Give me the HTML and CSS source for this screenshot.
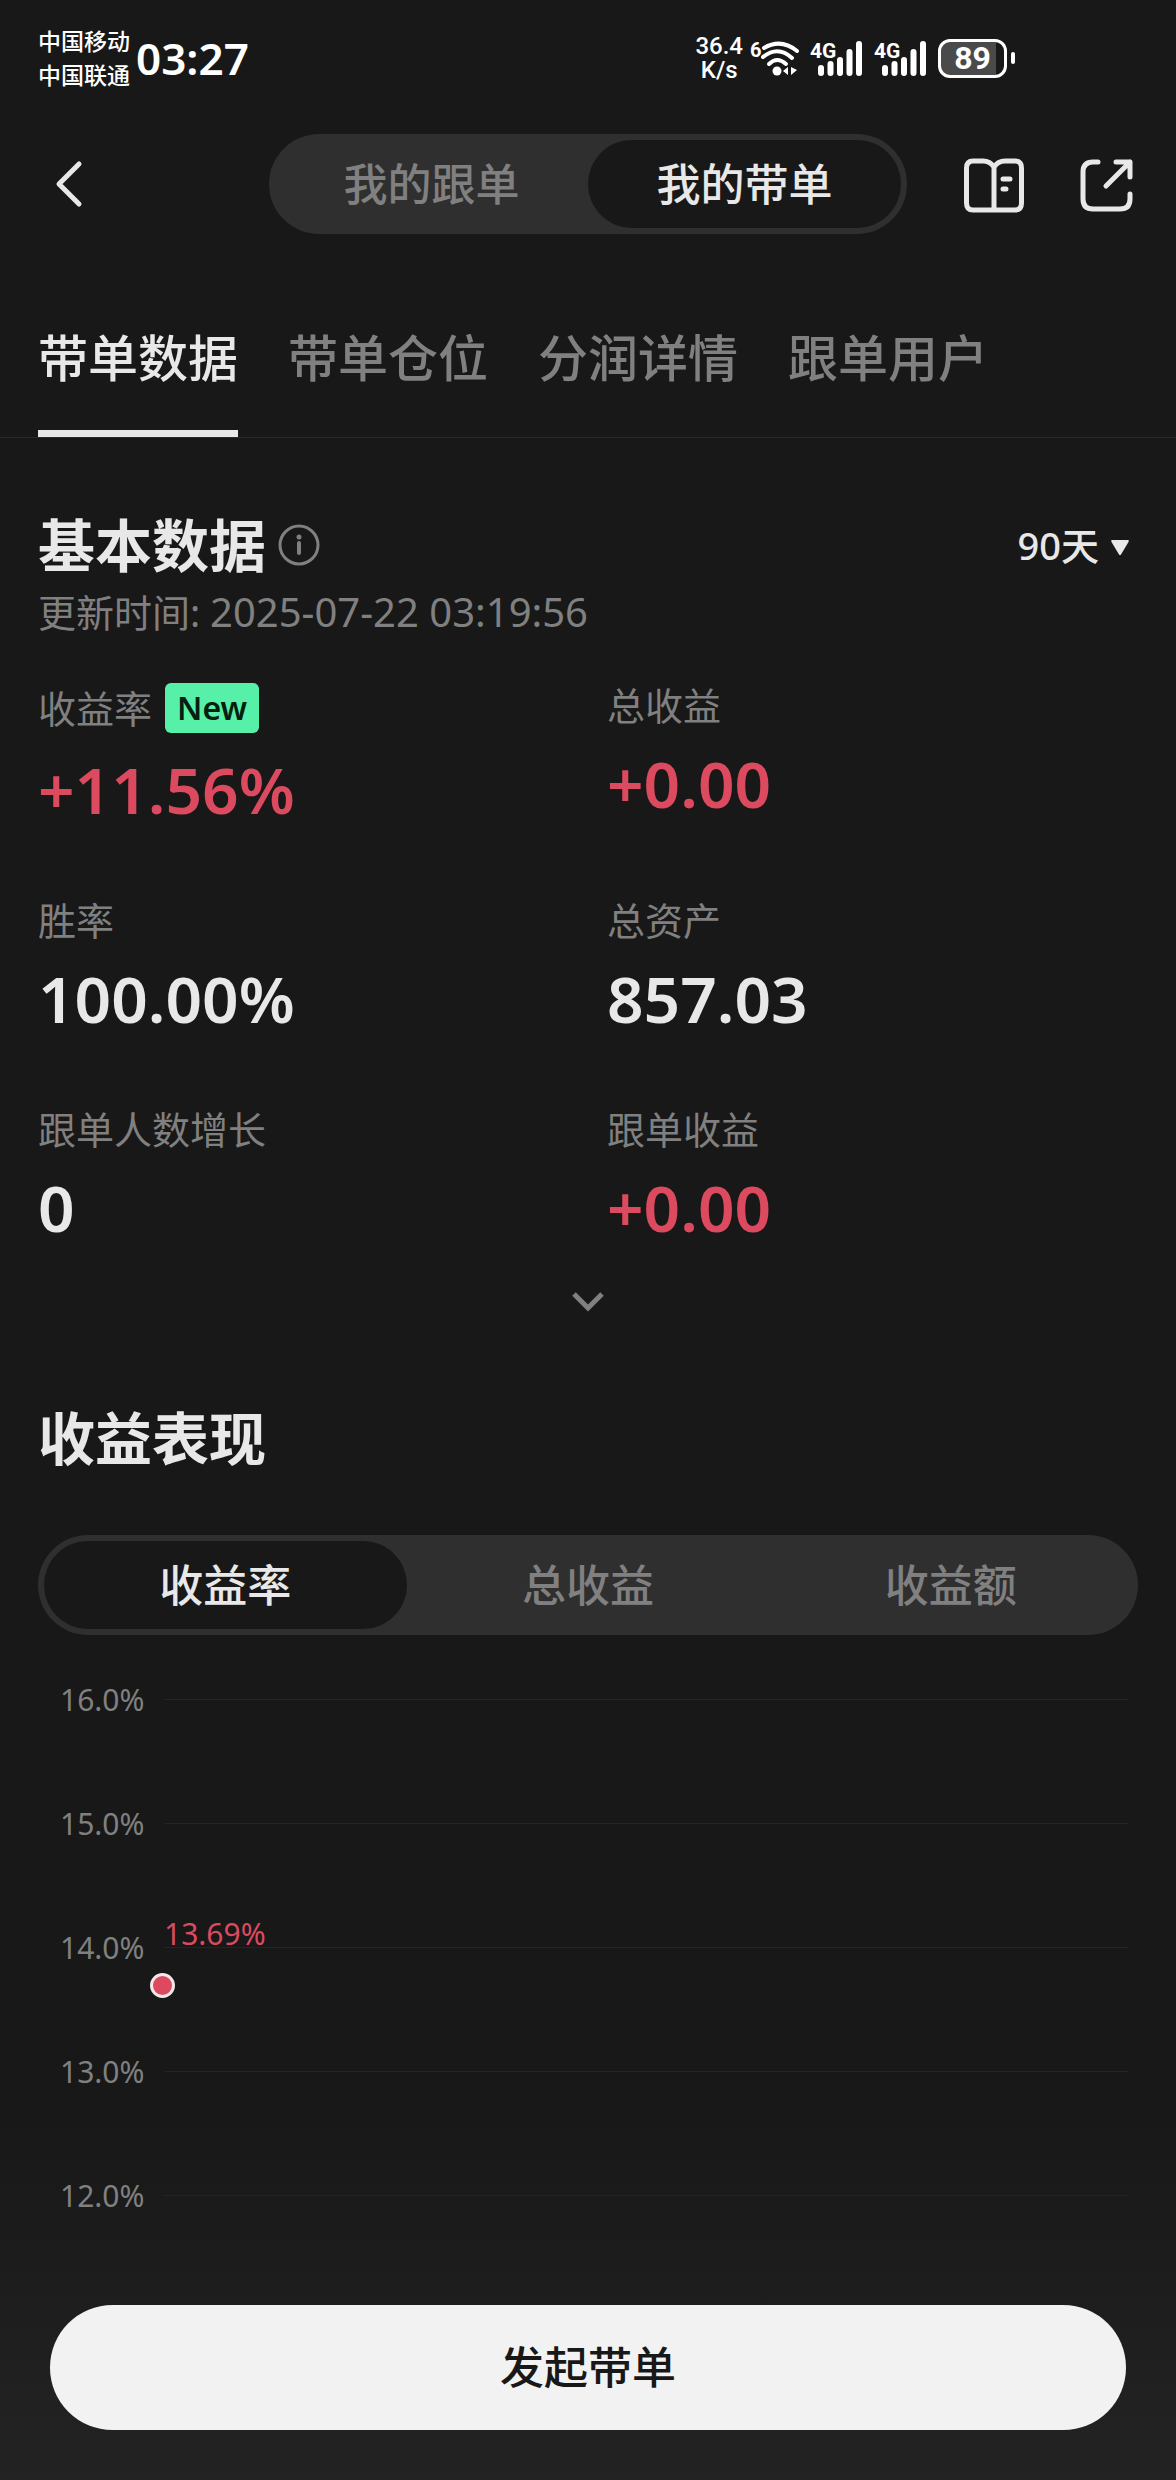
FILE: index.html
```
<!DOCTYPE html>
<html lang="zh-CN">
<head>
  <meta charset="UTF-8">
  <meta name="viewport" content="width=device-width, initial-scale=1.0">
  <title>我的带单</title>
  <link rel="stylesheet" href="styles.css">
</head>
<body>
  <div class="status-bar">
    <div class="carriers">
      <div>中国移动</div>
      <div>中国联通</div>
    </div>
    <div class="clock">03:27</div>
    <div class="status-icons">
      <div class="net-speed">
        <div>36.4</div>
        <div>K/s</div>
      </div>
      <svg class="wifi" width="50" height="38" viewBox="0 0 50 38" fill="none" stroke="#fff" stroke-width="4" stroke-linecap="round">
        <text class="svg-text" x="0" y="18" font-size="20">6</text>
        <path d="M14 9Q31 -1 47 12"/>
        <path d="M13 18Q28 6 42 19"/>
        <path d="M19 25Q27 17 36 25"/>
        <circle cx="27" cy="32" r="4.5" fill="#fff" stroke="none"/>
        <path d="M38 28v8l-5-4zM41 28v8l6-5z" fill="#fff" stroke="none"/>
      </svg>
      <svg class="signal" width="54" height="38" viewBox="0 0 54 38" fill="none" stroke="#fff" stroke-width="6" stroke-linecap="round">
        <text class="svg-text" x="0" y="19" font-size="21">4G</text>
        <path d="M11 29v5M20.500 25v9M30 21v13M39.500 13v21M49 5v29"/>
      </svg>
      <svg class="signal" width="54" height="38" viewBox="0 0 54 38" fill="none" stroke="#fff" stroke-width="6" stroke-linecap="round">
        <text class="svg-text" x="0" y="19" font-size="21">4G</text>
        <path d="M11 29v5M20.500 25v9M30 21v13M39.500 13v21M49 5v29"/>
      </svg>
      <div class="battery"><span class="battery-level">89</span></div>
    </div>
  </div>

  <header class="header">
    <button class="icon-btn back" aria-label="返回">
      <svg width="30" height="50" viewBox="0 0 30 50" fill="none" stroke="#e8e8e8" stroke-width="5" stroke-linecap="round" stroke-linejoin="round">
        <path d="M26 5L6 25L26 45"/>
      </svg>
    </button>
    <div class="segment header-segment" role="tablist">
      <button role="tab">我的跟单</button>
      <button role="tab" class="active" aria-selected="true">我的带单</button>
    </div>
    <div class="header-actions">
      <button class="icon-btn" aria-label="教程">
        <svg width="60" height="56" viewBox="0 0 60 56" fill="none" stroke="#e8e8e8" stroke-width="5" stroke-linecap="round" stroke-linejoin="round">
          <path d="M30 54H9Q2.500 54 2.500 47V12Q2.500 5 9 5H19Q26 5 30 11Q34 5 41 5H51Q57.500 5 57.500 12V47Q57.500 54 51 54H30V12"/>
          <path d="M39 23H46M39 33H42"/>
        </svg>
      </button>
      <button class="icon-btn" aria-label="分享">
        <svg width="54" height="56" viewBox="0 0 54 56" fill="none" stroke="#e8e8e8" stroke-width="5" stroke-linecap="round" stroke-linejoin="round">
          <path d="M18 6H13Q3 6 3 16V43Q3 53 13 53H40Q50 53 50 43V38"/>
          <path d="M36 6H50V21M50 6L26 30"/>
        </svg>
      </button>
    </div>
  </header>

  <nav class="tabs">
    <a href="#data" class="active">带单数据</a>
    <a href="#position">带单仓位</a>
    <a href="#profit">分润详情</a>
    <a href="#users">跟单用户</a>
  </nav>

  <main>
    <section id="data">
      <div class="title-row">
        <h2>基本数据</h2>
        <button class="icon-btn info" aria-label="说明">
          <svg width="42" height="42" viewBox="0 0 42 42" fill="none" stroke="#808080" stroke-width="3" stroke-linecap="round">
            <circle cx="21" cy="21" r="19"/>
            <path d="M21 19v10" stroke-width="4"/>
            <circle cx="21" cy="13" r="2.500" fill="#808080" stroke="none"/>
          </svg>
        </button>
        <label class="period">
          <select aria-label="时间范围">
            <option>90天</option>
            <option>30天</option>
            <option>7天</option>
          </select>
          <svg width="18" height="16" viewBox="0 0 18 16" fill="#e8e8e8"><path d="M1 0H17Q18.500 0 17.500 2L10 14.500Q9 16 8 14.500L.5 2Q-.5 0 1 0Z"/></svg>
        </label>
      </div>
      <p class="updated">更新时间: <time>2025-07-22 03:19:56</time></p>

      <dl class="stats">
        <div>
          <dt>收益率 <span class="badge">New</span></dt>
          <dd class="up">+11.56%</dd>
        </div>
        <div>
          <dt>总收益</dt>
          <dd class="up">+0.00</dd>
        </div>
        <div>
          <dt>胜率</dt>
          <dd>100.00%</dd>
        </div>
        <div>
          <dt>总资产</dt>
          <dd>857.03</dd>
        </div>
        <div>
          <dt>跟单人数增长</dt>
          <dd>0</dd>
        </div>
        <div>
          <dt>跟单收益</dt>
          <dd class="up">+0.00</dd>
        </div>
      </dl>
      <button class="icon-btn expand" aria-label="展开">
        <svg width="32" height="22" viewBox="0 0 32 22" fill="none" stroke="#808080" stroke-width="5">
          <path d="M2 3L16 17L30 3"/>
        </svg>
      </button>
    </section>

    <section>
      <h2 class="section-title">收益表现</h2>
      <div class="segment" role="tablist">
        <button role="tab" class="active" aria-selected="true">收益率</button>
        <button role="tab">总收益</button>
        <button role="tab">收益额</button>
      </div>

      <div class="chart">
        <div class="chart-row"><span>16.0%</span></div>
        <div class="chart-row"><span>15.0%</span></div>
        <div class="chart-row"><span>14.0%</span></div>
        <div class="chart-row"><span>13.0%</span></div>
        <div class="chart-row"><span>12.0%</span></div>
        <div class="plot">
          <!-- (16 - 13.69) / 4 -->
          <div class="point" style="top: 57.75%"><span>13.69%</span></div>
        </div>
      </div>
    </section>
  </main>

  <footer class="action-bar">
    <button class="start-btn">发起带单</button>
  </footer>
</body>
</html>
```
FILE: styles.css
```
:root {
  --bg: #181818;
  --panel: #2f2f2f;
  --text: #e8e8e8;
  --muted: #808080;
  --red: #dc4a5f;
  --green: #56f0a9;
  --side: 38px;
  --font: "Noto Sans", "Noto Sans CJK SC", sans-serif;
}
* { box-sizing: border-box; margin: 0; padding: 0; }
body { min-height: 100vh; display: flex; flex-direction: column; font-family: var(--font); background: var(--bg); color: var(--text); }
button, select { font: inherit; color: inherit; background: none; border: none; cursor: pointer; }
svg { display: block; overflow: visible; }
.icon-btn { display: flex; align-items: center; justify-content: center; }

/* status bar */
.status-bar { display: flex; align-items: center; padding: 24px 161px 0 var(--side); color: #fff; }
.carriers { font-size: 23px; line-height: 34px; font-weight: 500; }
.clock { margin-left: 6px; font-size: 44px; line-height: 68px; font-weight: 600; }
.status-icons { display: flex; align-items: center; gap: 9px; margin-left: auto; }
.net-speed { margin-right: -2px; font-family: Roboto, sans-serif; font-size: 24px; line-height: 24px; font-weight: 500; text-align: center; }
.svg-text { font-family: Roboto, sans-serif; font-weight: 700; fill: #fff; stroke: none; }
.battery { display: flex; align-items: center; }
.battery::after { content: ""; width: 4px; height: 12px; margin-left: 4px; border-radius: 2px; background: #fff; }
.battery-level { width: 69px; height: 39px; border: 3px solid #fff; border-radius: 12px; background: linear-gradient(90deg, #4a4a4a 88%, transparent 88%); font-family: Roboto, sans-serif; font-size: 32px; line-height: 33px; font-weight: 700; text-align: center; }
.wifi, .signal { margin-right: 1px; }

/* header */
.header { display: grid; grid-template-columns: 1fr 638px 1fr; align-items: center; padding: 42px var(--side) 0; }
.back { justify-self: start; width: 60px; height: 60px; }
.header-actions { display: flex; justify-content: flex-end; gap: 56px; padding-right: 4px; }
.segment { display: flex; padding: 6px; border-radius: 50px; background: var(--panel); }
.segment button { flex: 1; border-radius: 44px; font-size: 44px; line-height: 88px; font-weight: 500; color: var(--muted); }
.segment .active { background: var(--bg); color: var(--text); }

/* tabs */
.tabs { display: flex; gap: 50px; margin-top: 94px; padding: 0 var(--side); border-bottom: 1px solid #2b2b2b; }
.tabs a { padding-bottom: 42px; border-bottom: 7px solid transparent; font-size: 50px; line-height: 60px; font-weight: 500; color: var(--muted); text-decoration: none; }
.tabs .active { color: var(--text); border-color: var(--text); }

main { flex: 1; padding: 0 var(--side); }
h2 { font-size: 57px; line-height: 76px; font-weight: 700; }
.title-row { display: flex; align-items: center; margin-top: 69px; }
.info { margin-left: 12px; }
.period { display: flex; align-items: center; gap: 12px; margin-left: auto; padding-right: 9px; }
.period select { appearance: none; font-size: 38px; line-height: 50px; font-weight: 500; field-sizing: content; }
.period svg { margin-top: 6px; }
.updated { font-size: 38px; line-height: 58px; color: var(--muted); }
.updated time { font-size: 40px; }

/* stats */
.stats { display: grid; grid-template-columns: 1fr 1fr; gap: 68px 38px; margin-top: 42px; }
.stats dt { display: flex; align-items: center; gap: 13px; font-size: 38px; line-height: 44px; color: var(--muted); }
.stats dd { margin-top: 17px; font-size: 64px; line-height: 80px; font-weight: 600; }
.stats .up { color: var(--red); }
.badge { padding: 0 12px; border-radius: 6px; background: var(--green); color: #06200f; font-size: 32px; line-height: 50px; font-weight: 600; }
.expand { width: 60px; height: 40px; margin: 34px auto 0; }

/* chart */
.section-title { margin: 78px 0 59px; }
.chart { position: relative; margin-top: 2px; padding: 0 10px 0 22px; }
.chart-row { display: flex; align-items: center; height: 124px; font-size: 30px; color: var(--muted); }
.chart-row span { width: 104px; }
.chart-row::after { content: ""; flex: 1; height: 1px; background: #242424; }
.plot { position: absolute; top: 62px; bottom: 62px; left: 126px; right: 10px; }
.point { position: absolute; left: -14px; width: 25px; height: 25px; margin-top: -12px; border: 3px solid #f4e8e8; border-radius: 50%; background: var(--red); }
.point span { position: absolute; left: 11px; bottom: 41px; font-size: 30px; line-height: 40px; color: var(--red); }

.action-bar { margin-top: -140px; padding: 188px 50px 50px; background: linear-gradient(transparent, #232323); }
.start-btn { display: block; width: 100%; border-radius: 63px; background: #f2f2f2; color: #181818; font-size: 44px; line-height: 125px; font-weight: 500; }
```
